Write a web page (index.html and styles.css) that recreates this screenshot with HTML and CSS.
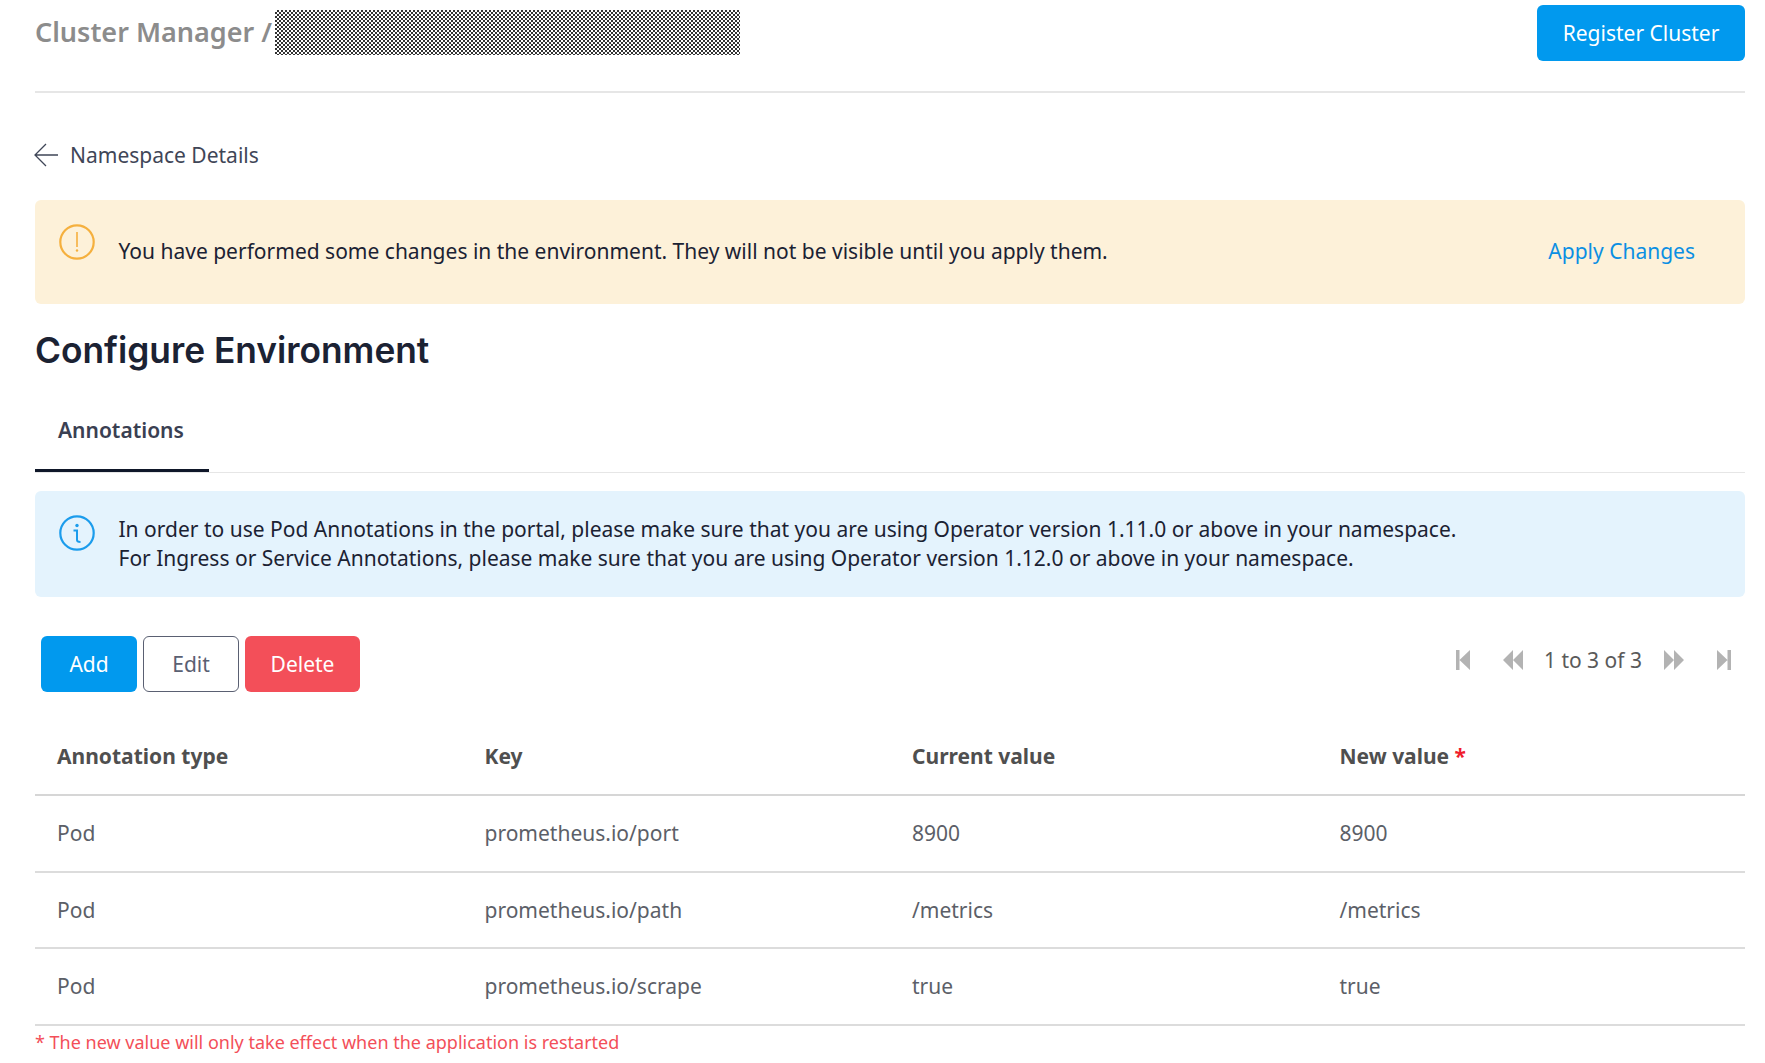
FILE: index.html
```html
<!DOCTYPE html>
<html lang="en">
<head>
<meta charset="utf-8">
<title>Namespace Details</title>
<link rel="stylesheet" href="styles.css">
</head>
<body>
<div class="page">
  <header class="topbar">
    <div class="crumbs"><span class="crumb-text">Cluster Manager /</span><span class="redacted"></span></div>
    <button class="btn btn-primary btn-register">Register Cluster</button>
  </header>
  <div class="backrow">
    <svg class="back-icon" viewBox="0 0 24 24" width="24" height="24"><path d="M12 1 1 12l11 11M1 12h23" fill="none" stroke="#3f4657" stroke-width="1.3"/></svg>
    <span>Namespace Details</span>
  </div>
  <div class="alert alert-warn">
    <svg class="alert-icon" viewBox="0 0 36 36" width="36" height="36"><circle cx="18" cy="18" r="16.7" fill="none" stroke="#f5b03e" stroke-width="2.2"/><path d="M18 8v15" stroke="#f5b03e" stroke-width="1.6"/><circle cx="18" cy="26.5" r="1.2" fill="#f5b03e"/></svg>
    <span class="alert-text">You have performed some changes in the environment. They will not be visible until you apply them.</span>
    <a class="apply">Apply Changes</a>
  </div>
  <h1 class="heading">Configure Environment</h1>
  <nav class="tabs"><div class="tab">Annotations</div></nav>
  <div class="alert alert-info">
    <svg class="alert-icon" viewBox="0 0 36 36" width="36" height="36"><circle cx="18" cy="18" r="16.7" fill="none" stroke="#1b9cec" stroke-width="2.2"/><circle cx="18" cy="10.5" r="1.7" fill="#1b9cec"/><path d="M14.5 15.500H18V25c0 1.500 1 2 3.500 2" fill="none" stroke="#1b9cec" stroke-width="2"/></svg>
    <div class="alert-text"><div>In order to use Pod Annotations in the portal, please make sure that you are using Operator version 1.11.0 or above in your namespace.</div><div>For Ingress or Service Annotations, please make sure that you are using Operator version 1.12.0 or above in your namespace.</div></div>
  </div>
  <div class="toolbar">
    <div class="actions">
      <button class="btn btn-primary btn-add">Add</button>
      <button class="btn btn-outline">Edit</button>
      <button class="btn btn-danger">Delete</button>
    </div>
    <div class="pager">
      <svg viewBox="0 0 14 20" width="14" height="20"><path d="M0 0h3.500v20H0zM14 0v20L3.500 10z" fill="#b3b3b3"/></svg>
      <svg viewBox="0 0 20 20" width="20" height="20"><path d="M10 0v20L0 10zM20 0v20L10 10z" fill="#b3b3b3"/></svg>
      <span class="pg-text">1 to 3 of 3</span>
      <svg viewBox="0 0 20 20" width="20" height="20"><path d="M0 0v20l10-10zM10 0v20l10-10z" fill="#b3b3b3"/></svg>
      <svg viewBox="0 0 14 20" width="14" height="20"><path d="M10.500 0H14v20h-3.500zM0 0v20l10.500-10z" fill="#b3b3b3"/></svg>
    </div>
  </div>
  <table class="grid">
    <thead><tr><th>Annotation type</th><th>Key</th><th>Current value</th><th>New value <span class="req">*</span></th></tr></thead>
    <tbody>
      <tr><td>Pod</td><td>prometheus.io/port</td><td>8900</td><td>8900</td></tr>
      <tr><td>Pod</td><td>prometheus.io/path</td><td>/metrics</td><td>/metrics</td></tr>
      <tr><td>Pod</td><td>prometheus.io/scrape</td><td>true</td><td>true</td></tr>
    </tbody>
  </table>
  <p class="note">* The new value will only take effect when the application is restarted</p>
</div>
</body>
</html>
```

FILE: styles.css
```css
* { box-sizing: border-box; }
html, body { margin: 0; padding: 0; background: #fff; }
body { font-family: "Noto Sans", sans-serif; color: #4a4f5c; overflow: hidden; }
.page { width: 1765px; height: 1063px; padding: 0 20px 0 35px; }
.topbar { height: 93px; display: flex; justify-content: space-between; align-items: flex-start; border-bottom: 2px solid #e6e6e6; }
.crumbs { display: flex; align-items: flex-start; padding-top: 10px; }
.crumb-text { font-size: 27px; font-weight: 600; color: #8c8c8c; line-height: 43px; margin-right: 3px; }
.redacted { width: 465px; height: 45px; background: repeating-conic-gradient(#333 0 25%, #fff 0 50%) 0 0 / 4px 4px; }
.btn { font-family: inherit; font-size: 21px; border: 0; border-radius: 6px; cursor: pointer; height: 56px; padding: 0; }
.btn-primary { background: #0199ee; color: #fff; }
.btn-register { width: 208px; margin-top: 5px; }
.backrow { display: flex; align-items: center; gap: 12px; font-size: 21px; color: #3f4657; margin-top: 44px; height: 36px; margin-left: -1px; }
.back-icon { flex: none; }
.alert { display: flex; border-radius: 6px; padding-left: 24px; color: #1b2233; font-size: 21px; }
.alert-warn { background: #fdf1d9; height: 104px; margin-top: 27px; position: relative; }
.alert-info { background: #e4f3fd; height: 106px; margin-top: 18px; }
.alert-icon { flex: none; margin-top: 24px; }
.alert-text { margin-left: 23.5px; }
.alert-warn .alert-text { align-self: center; padding-bottom: 3px; }
.alert-info .alert-text { padding-top: 24px; line-height: 29px; }
.apply { position: absolute; right: 50px; top: 50%; transform: translateY(-50%); margin-top: -1px; color: #0b8fe3; }
.heading { font-family: "Inter", sans-serif; font-size: 35.3px; font-weight: 600; color: #1b2233; margin: 0; padding-top: 25px; line-height: 44px; }
.tabs { border-bottom: 1px solid #e6e6e6; height: 100px; }
.tab { width: 174px; height: 99px; border-bottom: 3px solid #0f1729; padding: 43px 0 0 23px; font-size: 21px; font-weight: 600; color: #3a4052; line-height: 28px; }
.toolbar { display: flex; justify-content: space-between; align-items: flex-start; margin-top: 39px; height: 56px; }
.actions { display: flex; gap: 6px; padding-left: 6px; }
.btn-add, .btn-outline { width: 96px; }
.btn-outline { background: #fff; border: 1px solid #5a6072; color: #5a6072; }
.btn-danger { background: #f34f59; color: #fff; width: 115px; }
.pager { display: flex; align-items: center; gap: 33px; height: 48px; color: #5a5a5a; font-size: 21px; padding-right: 14px; }
.pager svg { flex: none; }
.pg-text { margin: 0 -11px 0 -12px; }
.grid { width: 100%; border-collapse: collapse; table-layout: fixed; margin-top: 26px; font-size: 21px; }
.grid th, .grid td { text-align: left; padding: 0 0 0 22px; }
.grid th { height: 77px; font-weight: 700; color: #4f4f4f; border-bottom: 2px solid #d6d6d6; }
.grid td { height: 76.5px; color: #5c5f68; border-bottom: 2px solid #dcdcdc; }
.req { color: #f01c2c; }
.note { margin: 3px 0 0; color: #f34f59; font-size: 18px; line-height: 26px; }
```
